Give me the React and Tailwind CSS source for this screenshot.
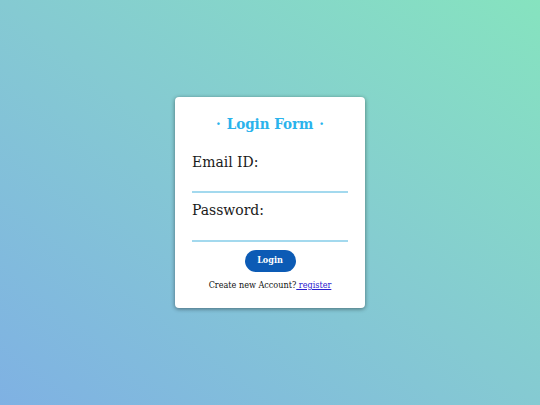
export default function App() {
  return (
    <div
      className="w-full h-[405px] flex items-center justify-center bg-gradient-to-tr from-[#7fb1e3] via-[#85cad2] to-[#86e3bf]"
      style={{ fontFamily: '"DejaVu Serif Condensed", "DejaVu Serif", "Liberation Serif", serif' }}
    >
      <div className="w-[190px] h-[211px] bg-white rounded-[4px] shadow-[0_1px_4px_rgba(0,0,0,0.45)] px-[17px] pt-[17px]">
        <h1 className="text-center text-[15px] font-bold text-[#2ab3ec] leading-[20px]">
          <span className="mr-[6px]">·</span>Login Form<span className="ml-[6px]">·</span>
        </h1>
        <form className="mt-[18px]" onSubmit={(e) => e.preventDefault()}>
          <label className="block text-[15.5px] text-[#1a1a1a] leading-[20px]">Email ID:</label>
          <input
            type="email"
            className="block w-full h-[19px] mt-[2px] border-b-2 border-[#a3d9ee] outline-none text-[12px]"
          />
          <label className="block text-[15.5px] text-[#1a1a1a] leading-[20px] mt-[7px]">Password:</label>
          <input
            type="password"
            className="block w-full h-[20px] mt-[2px] border-b-2 border-[#a3d9ee] outline-none text-[12px]"
          />
          <div className="flex justify-center mt-[8px]">
            <button className="w-[51px] h-[22px] rounded-full bg-[#0c5bb5] text-white text-[9px] font-bold">
              Login
            </button>
          </div>
          <p className="text-center text-[9px] text-[#111] mt-[6px] leading-[14px]">
            Create new Account?
            <a href="#" className="text-[#2a20d0] underline"> register</a>
          </p>
        </form>
      </div>
    </div>
  );
}
